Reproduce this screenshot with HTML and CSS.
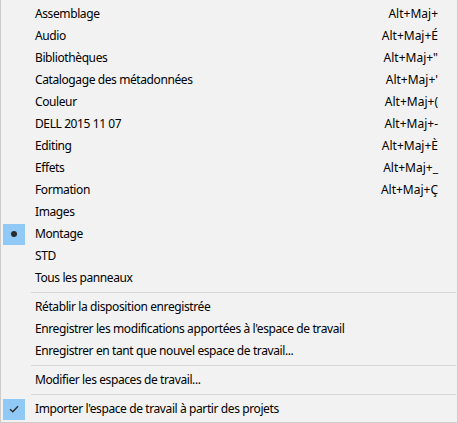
FILE: index.html
```html
<!DOCTYPE html>
<html lang="fr">
<head>
<meta charset="utf-8">
<title>Menu</title>
<link rel="stylesheet" href="styles.css">
</head>
<body>
<div class="menu">
  <div class="item"><span class="mark"></span><span class="label">Assemblage</span><span class="key">Alt+Maj+</span></div>
  <div class="item"><span class="mark"></span><span class="label">Audio</span><span class="key">Alt+Maj+É</span></div>
  <div class="item"><span class="mark"></span><span class="label">Bibliothèques</span><span class="key">Alt+Maj+"</span></div>
  <div class="item"><span class="mark"></span><span class="label">Catalogage des métadonnées</span><span class="key">Alt+Maj+'</span></div>
  <div class="item"><span class="mark"></span><span class="label">Couleur</span><span class="key">Alt+Maj+(</span></div>
  <div class="item"><span class="mark"></span><span class="label">DELL 2015 11 07</span><span class="key">Alt+Maj+-</span></div>
  <div class="item"><span class="mark"></span><span class="label">Editing</span><span class="key">Alt+Maj+È</span></div>
  <div class="item"><span class="mark"></span><span class="label">Effets</span><span class="key">Alt+Maj+_</span></div>
  <div class="item"><span class="mark"></span><span class="label">Formation</span><span class="key">Alt+Maj+Ç</span></div>
  <div class="item"><span class="mark"></span><span class="label">Images</span></div>
  <div class="item"><span class="mark on"><span class="dot"></span></span><span class="label">Montage</span></div>
  <div class="item"><span class="mark"></span><span class="label">STD</span></div>
  <div class="item"><span class="mark"></span><span class="label">Tous les panneaux</span></div>
  <div class="sep"></div>
  <div class="item"><span class="mark"></span><span class="label">Rétablir la disposition enregistrée</span></div>
  <div class="item"><span class="mark"></span><span class="label">Enregistrer les modifications apportées à l'espace de travail</span></div>
  <div class="item"><span class="mark"></span><span class="label">Enregistrer en tant que nouvel espace de travail...</span></div>
  <div class="sep"></div>
  <div class="item"><span class="mark"></span><span class="label">Modifier les espaces de travail...</span></div>
  <div class="sep"></div>
  <div class="item"><span class="mark on"><svg class="tick" width="10" height="8" viewBox="0 0 10 8"><path d="M1 4.2 L3.8 6.8 L9 1.2" fill="none" stroke="#2b2b2b" stroke-width="1.4"/></svg></span><span class="label">Importer l'espace de travail à partir des projets</span></div>
</div>
</body>
</html>
```
FILE: styles.css
```css
html, body {
  margin: 0;
  padding: 0;
  background: #f2f2f2;
}
.menu {
  width: 458px;
  height: 423px;
  box-sizing: border-box;
  background: #f2f2f2;
  border: 1px solid #cccccc;
  border-top: none;
  padding-top: 3px;
  font-family: "Noto Sans", "Segoe UI", sans-serif;
  font-size: 12px;
  letter-spacing: -0.4px;
  color: #000;
}
.item {
  display: flex;
  align-items: center;
  height: 22px;
}
.mark {
  width: 22px;
  height: 21px;
  margin-left: 2px;
  display: flex;
  align-items: center;
  justify-content: center;
  flex: none;
}
.mark.on {
  background: #90c8f6;
}
.dot {
  width: 6px;
  height: 6px;
  border-radius: 50%;
  background: #2b2b2b;
}
.label {
  margin-left: 10px;
  margin-bottom: 2px;
  white-space: nowrap;
}
.key {
  margin-left: auto;
  margin-right: 19px;
  margin-bottom: 2px;
  letter-spacing: 0;
  white-space: nowrap;
}
.sep {
  height: 7px;
  display: flex;
  align-items: center;
  margin-left: 30px;
  margin-right: 1px;
}
.sep::before {
  content: "";
  flex: 1;
  height: 1px;
  background: #d7d7d7;
}
```
